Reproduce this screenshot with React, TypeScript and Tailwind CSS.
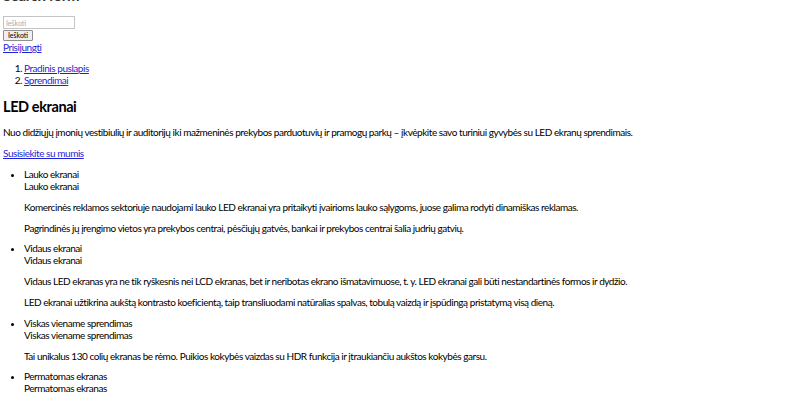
export default function App() {
  const items = [
    {
      t: "Lauko ekranai",
      p: [
        "Komercinės reklamos sektoriuje naudojami lauko LED ekranai yra pritaikyti įvairioms lauko sąlygoms, juose galima rodyti dinamiškas reklamas.",
        "Pagrindinės jų įrengimo vietos yra prekybos centrai, pėsčiųjų gatvės, bankai ir prekybos centrai šalia judrių gatvių.",
      ],
    },
    {
      t: "Vidaus ekranai",
      p: [
        "Vidaus LED ekranas yra ne tik ryškesnis nei LCD ekranas, bet ir neribotas ekrano išmatavimuose, t. y. LED ekranai gali būti nestandartinės formos ir dydžio.",
        "LED ekranai užtikrina aukštą kontrasto koeficientą, taip transliuodami natūralias spalvas, tobulą vaizdą ir įspūdingą pristatymą visą dieną.",
      ],
    },
    {
      t: "Viskas viename sprendimas",
      p: [
        "Tai unikalus 130 colių ekranas be rėmo. Puikios kokybės vaizdas su HDR funkcija ir įtraukiančiu aukštos kokybės garsu.",
      ],
    },
    { t: "Permatomas ekranas", p: [] },
  ];
  return (
    <div className="h-[405px] overflow-hidden bg-white pl-[3px] font-[Lato,sans-serif] text-[10px] leading-[12px] tracking-[-0.45px] text-black">
      <h2 className="mt-[-13px] mb-[13px] text-[15px] leading-[16px] font-bold tracking-[-0.4px] text-[#333]">Search form</h2>
      <input
        className="block h-[13px] w-[72px] border border-[#c4c4c4] px-[2px] text-[7px] leading-[11px] tracking-normal placeholder:text-[#aaa]"
        placeholder="Ieškoti"
      />
      <button className="mt-[1px] block h-[11px] rounded-[1px] border border-[#8f8f8f] bg-[#efefef] px-[4px] text-[7px] leading-[9px] tracking-normal text-black">
        Ieškoti
      </button>
      <a href="#" className="block w-fit text-[#1f1fd6] underline">
        Prisijungti
      </a>
      <ol className="mt-[9px] list-decimal pl-[21px]">
        <li>
          <a href="#" className="text-[#1f1fd6] underline">Pradinis puslapis</a>
        </li>
        <li>
          <a href="#" className="text-[#1f1fd6] underline">Sprendimai</a>
        </li>
      </ol>
      <h2 className="mt-[11px] text-[14.5px] leading-[20px] font-bold tracking-[-0.4px]">LED ekranai</h2>
      <p className="mt-[9px]">
        Nuo didžiųjų įmonių vestibiulių ir auditorijų iki mažmeninės prekybos parduotuvių ir pramogų parkų – įkvėpkite savo turiniui gyvybės su LED ekranų sprendimais.
      </p>
      <p className="mt-[9px]">
        <a href="#" className="text-[#1f1fd6] underline">Susisiekite su mumis</a>
      </p>
      <ul className="mt-[9px] list-disc pl-[21px]">
        {items.map((it) => (
          <li key={it.t} className="mb-[8.8px]">
            <div>{it.t}</div>
            <div>{it.t}</div>
            {it.p.map((x) => (
              <p key={x} className="mt-[8.8px]">{x}</p>
            ))}
          </li>
        ))}
      </ul>
    </div>
  );
}
